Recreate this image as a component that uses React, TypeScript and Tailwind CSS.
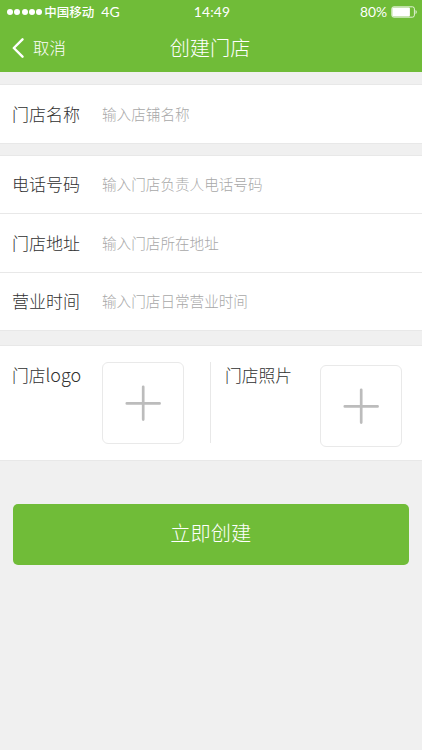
import React from 'react';

const cjk = "font-['Noto_Sans_CJK_SC',sans-serif]";

function StatusBar() {
  return (
    <div className="flex h-6 items-center pl-[7px] pr-[5px] font-['Noto_Sans_CJK_SC',sans-serif] text-[12.5px] font-normal leading-6 text-white">
      <div className="flex flex-1 items-center">
        <div className="flex gap-[1.1px]">
          {[0, 1, 2, 3, 4].map((n) => (
            <span key={n} className="size-[6.2px] rounded-full bg-white" />
          ))}
        </div>
        <span className="ml-[2px] font-medium">中国移动</span>
        <span className="ml-[7px] font-['Lato',sans-serif] text-[14px]">4G</span>
      </div>
      <span className="font-['Lato',sans-serif] text-[13.8px] tracking-[0.2px]">14:49</span>
      <div className="flex flex-1 items-center justify-end">
        <span className="font-['Lato',sans-serif] text-[13.8px]">80%</span>
        <svg className="ml-[4px]" width="26" height="12" viewBox="0 0 26 12" fill="none">
          <rect x="0.8" y="0.8" width="22.6" height="10.4" rx="2" stroke="white" strokeOpacity="0.8" />
          <rect x="1.3" y="1.4" width="17.6" height="9.2" rx="1" fill="white" />
          <path d="M24.6 4v4.2c1.4-.6 1.4-3.6 0-4.2z" fill="white" />
        </svg>
      </div>
    </div>
  );
}

function Field({ label, hint }: { label: string; hint: string }) {
  return (
    <label className="flex h-full items-center bg-white pl-[12px]">
      <span className="w-[90px] pb-px text-[17px] text-[#303030]">{label}</span>
      <span className="pb-px text-[14.6px] text-[#a8a8a8]">{hint}</span>
    </label>
  );
}

function AddBox() {
  return (
    <button className="flex size-[82px] items-center justify-center rounded-[6px] border border-[#e9e9e9] bg-white">
      <svg width="36" height="36" viewBox="0 0 36 36" stroke="#bcbcbc" strokeWidth="2.7" strokeLinecap="round">
        <path d="M18.2 1.8v32.8M1.8 18.4h32.8" />
      </svg>
    </button>
  );
}

export default function App() {
  return (
    <main className={`${cjk} flex h-[750px] w-[422px] flex-col overflow-hidden bg-[#f0f0f0] font-light`}>
      <header className="h-[72px] bg-[#70bc38]">
        <StatusBar />
        <nav className="flex h-12 items-center pl-[12px] pr-[14px] text-white">
          <button className="flex flex-1 items-center text-[16.4px]">
            <svg width="12" height="20" viewBox="0 0 12 20" fill="none" stroke="white" strokeWidth="2.4" strokeLinecap="round" strokeLinejoin="round">
              <path d="M10.5 1.3 1.8 10l8.7 8.7" />
            </svg>
            <span className="ml-[9px] pb-px">取消</span>
          </button>
          <h1 className="text-[20.2px]">创建门店</h1>
          <div className="flex-1" />
        </nav>
      </header>

      <section className="mt-[12px] h-[60px] border-y border-[#e8e8e8]">
        <Field label="门店名称" hint="输入店铺名称" />
      </section>

      <section className="mt-[11px] flex h-[176px] flex-col border-y border-[#e8e8e8]">
        <div className="h-[58px] border-b border-[#e8e8e8]"><Field label="电话号码" hint="输入门店负责人电话号码" /></div>
        <div className="h-[59px] border-b border-[#e8e8e8]"><Field label="门店地址" hint="输入门店所在地址" /></div>
        <div className="h-[57px]"><Field label="营业时间" hint="输入门店日常营业时间" /></div>
      </section>

      <section className="mt-[14px] flex h-[116px] border-y border-[#e8e8e8] bg-white pl-[12px] pt-[16px] text-[16.8px] text-[#303030]">
        <div className="flex h-[81px] w-[199px] border-r border-[#e8e8e8]">
          <span className="w-[90px] leading-[26px]">门店<span className="text-[18px] leading-none">logo</span></span>
          <AddBox />
        </div>
        <div className="flex pl-[14px]">
          <span className="w-[95px] leading-[26px]">门店照片</span>
          <div className="pt-[3px]"><AddBox /></div>
        </div>
      </section>

      <button className="ml-[12.5px] mr-[13px] mt-[43px] h-[61px] shrink-0 rounded-[5px] bg-[#70bc38] pb-[2px] text-[20.2px] text-white">
        立即创建
      </button>
    </main>
  );
}
